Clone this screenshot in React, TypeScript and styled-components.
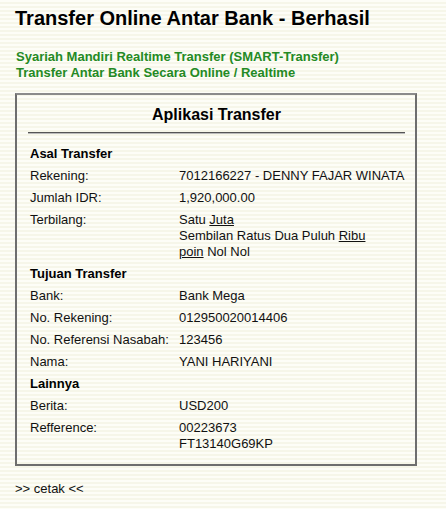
import React from "react";
import styled, { createGlobalStyle } from "styled-components";

const GlobalStyle = createGlobalStyle`
  html, body {
    margin: 0;
    padding: 0;
  }
  body {
    font-family: "Liberation Sans", Arial, sans-serif;
    font-size: 13px;
    color: #111;
    background-color: #fbfbf2;
    background-image: repeating-linear-gradient(
      to bottom,
      #fdfdf7 0px,
      #fdfdf7 2px,
      #f6f6e9 2px,
      #f6f6e9 4px
    );
    min-height: 509px;
  }
`;

const Page = styled.div`
  padding: 7px 15px 0 15px;
  width: 402px;
`;

const Title = styled.h1`
  margin: 0;
  font-size: 20px;
  font-weight: bold;
  line-height: 23px;
  color: #000;
`;

const Subtitle = styled.div`
  margin-top: 19px;
  padding-left: 1px;
  font-size: 13px;
  font-weight: bold;
  line-height: 16px;
  color: #248a24;
`;

const Box = styled.div`
  margin-top: 12px;
  border: 2px solid #6e6e6e;
  border-top-color: #8a8a8a;
  padding: 8px 10px 9px 11px;
`;

const BoxTitle = styled.div`
  text-align: center;
  font-size: 16px;
  font-weight: bold;
  line-height: 24px;
  color: #000;
`;

const Rule = styled.hr`
  margin: 5px 0 9px 0;
  border: none;
  border-top: 1px solid #555;
  border-bottom: 1px solid #bbb;
  height: 0;
`;

const Section = styled.div`
  font-weight: bold;
  line-height: 22px;
  padding-left: 2px;
  color: #000;
`;

const Row = styled.div`
  display: grid;
  grid-template-columns: 149px 1fr;
  padding: 3px 0 3px 2px;
  line-height: 16px;
`;

const Label = styled.div`
  color: #111;
`;

const Value = styled.div`
  color: #111;
`;

const Word = styled.span`
  text-decoration: underline;
`;

const Footer = styled.div`
  margin-top: 15px;
  line-height: 16px;
  color: #111;
`;

type Item = { label: string; value: React.ReactNode };

const asal: Item[] = [
  { label: "Rekening:", value: "7012166227 - DENNY FAJAR WINATA" },
  { label: "Jumlah IDR:", value: "1,920,000.00" },
  {
    label: "Terbilang:",
    value: (
      <>
        Satu <Word>Juta</Word>
        <br />
        Sembilan Ratus Dua Puluh <Word>Ribu</Word>
        <br />
        <Word>poin</Word> Nol Nol
      </>
    ),
  },
];

const tujuan: Item[] = [
  { label: "Bank:", value: "Bank Mega" },
  { label: "No. Rekening:", value: "012950020014406" },
  { label: "No. Referensi Nasabah:", value: "123456" },
  { label: "Nama:", value: "YANI HARIYANI" },
];

const lainnya: Item[] = [
  { label: "Berita:", value: "USD200" },
  {
    label: "Refference:",
    value: (
      <>
        00223673
        <br />
        FT13140G69KP
      </>
    ),
  },
];

const Rows = ({ items }: { items: Item[] }) => (
  <>
    {items.map((it) => (
      <Row key={it.label}>
        <Label>{it.label}</Label>
        <Value>{it.value}</Value>
      </Row>
    ))}
  </>
);

export default function App() {
  return (
    <>
      <GlobalStyle />
      <Page>
        <Title>Transfer Online Antar Bank - Berhasil</Title>
        <Subtitle>
          Syariah Mandiri Realtime Transfer (SMART-Transfer)
          <br />
          Transfer Antar Bank Secara Online / Realtime
        </Subtitle>
        <Box>
          <BoxTitle>Aplikasi Transfer</BoxTitle>
          <Rule />
          <Section>Asal Transfer</Section>
          <Rows items={asal} />
          <Section>Tujuan Transfer</Section>
          <Rows items={tujuan} />
          <Section>Lainnya</Section>
          <Rows items={lainnya} />
        </Box>
        <Footer>&gt;&gt; cetak &lt;&lt;</Footer>
      </Page>
    </>
  );
}
